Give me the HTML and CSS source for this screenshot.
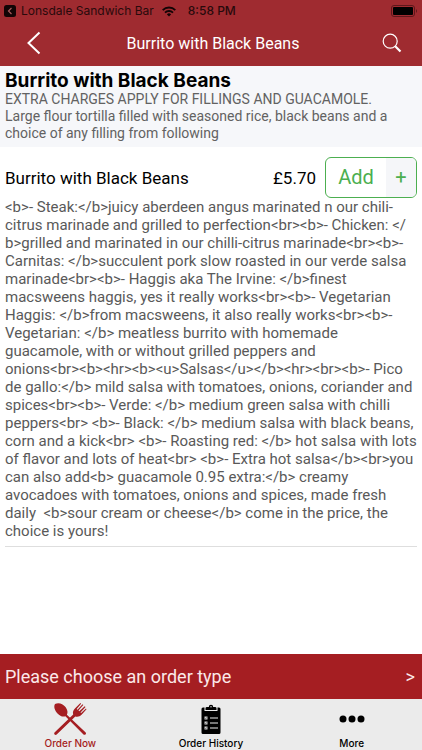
FILE: index.html
```html
<!DOCTYPE html>
<html lang="en">
<head>
<meta charset="utf-8">
<meta name="viewport" content="width=device-width, initial-scale=1">
<title>Burrito with Black Beans</title>
<link rel="stylesheet" href="styles.css">
</head>
<body>
<header class="top">
  <div class="status">
    <a class="back-app" href="#">
      <svg width="12" height="12" viewBox="0 0 12 12"><rect width="12" height="12" rx="2.5" fill="#120405"/><path d="M7.500 3 4.500 6l3 3" fill="none" stroke="#a65a5d" stroke-width="1.2"/></svg>
      <span>Lonsdale Sandwich Bar</span>
    </a>
    <svg class="wifi" width="14" height="11" viewBox="0 0 14 11"><g fill="none" stroke="#120405" stroke-width="1.9"><path d="M.7 4.100a9 9 0 0 1 12.600 0"/><path d="M3 6.600a5.800 5.800 0 0 1 8 0"/></g><path d="M4.900 8.400a3 3 0 0 1 4.200 0L7 10.600z" fill="#120405"/></svg>
    <time class="clock">8:58 PM</time>
    <svg class="battery" width="27" height="12" viewBox="0 0 27 12"><rect x=".5" y=".5" width="23" height="11" rx="2.5" fill="none" stroke="#5d171b"/><rect x="2" y="2" width="20" height="8" rx="1" fill="#000"/><path d="M25 4q2 2 0 4z" fill="#5d171b"/></svg>
  </div>
  <nav class="navbar">
    <button class="icon-button" aria-label="Back"><svg width="14" height="24" viewBox="0 0 14 24"><path d="M12.500 1.500 1.500 12l11 10.500" fill="none" stroke="#fff" stroke-width="2"/></svg></button>
    <h1>Burrito with Black Beans</h1>
    <button class="icon-button" aria-label="Search"><svg width="20" height="20" viewBox="0 0 20 20" fill="none" stroke="#fff"><circle cx="8.200" cy="8.200" r="7" stroke-width="1.2"/><path d="m13.200 13.200 5.300 5.300" stroke-width="2.2"/></svg></button>
  </nav>
</header>
<main>
  <section class="intro">
    <h2>Burrito with Black Beans</h2>
    <p>EXTRA CHARGES APPLY FOR FILLINGS AND GUACAMOLE.<br>Large flour tortilla filled with seasoned rice, black beans and a<br>choice of any filling from following</p>
  </section>
  <article class="item">
    <div class="item-row">
      <h3>Burrito with Black Beans</h3>
      <span class="price">£5.70</span>
      <button class="add"><span class="add-label">Add</span><span class="plus">+</span></button>
    </div>
    <p class="description">&lt;b&gt;- Steak:&lt;/b&gt;juicy aberdeen angus marinated n our chili-
citrus marinade and grilled to perfection&lt;br&gt;&lt;b&gt;- Chicken: &lt;/
b&gt;grilled and marinated in our chilli-citrus marinade&lt;br&gt;&lt;b&gt;-
Carnitas: &lt;/b&gt;succulent pork slow roasted in our verde salsa
marinade&lt;br&gt;&lt;b&gt;- Haggis aka The Irvine: &lt;/b&gt;finest
macsweens haggis, yes it really works&lt;br&gt;&lt;b&gt;- Vegetarian
Haggis: &lt;/b&gt;from macsweens, it also really works&lt;br&gt;&lt;b&gt;-
Vegetarian: &lt;/b&gt; meatless burrito with homemade
guacamole, with or without grilled peppers and
onions&lt;br&gt;&lt;b&gt;&lt;hr&gt;&lt;b&gt;&lt;u&gt;Salsas&lt;/u&gt;&lt;/b&gt;&lt;hr&gt;&lt;br&gt;&lt;b&gt;- Pico
de gallo:&lt;/b&gt; mild salsa with tomatoes, onions, coriander and
spices&lt;br&gt;&lt;b&gt;- Verde: &lt;/b&gt; medium green salsa with chilli
peppers&lt;br&gt; &lt;b&gt;- Black: &lt;/b&gt; medium salsa with black beans,
corn and a kick&lt;br&gt; &lt;b&gt;- Roasting red: &lt;/b&gt; hot salsa with lots
of flavor and lots of heat&lt;br&gt; &lt;b&gt;- Extra hot salsa&lt;/b&gt;&lt;br&gt;you
can also add&lt;b&gt; guacamole 0.95 extra:&lt;/b&gt; creamy
avocadoes with tomatoes, onions and spices, made fresh
daily  &lt;b&gt;sour cream or cheese&lt;/b&gt; come in the price, the
choice is yours!</p>
  </article>
</main>
<footer>
  <button class="order-type"><span>Please choose an order type</span><span>&gt;</span></button>
  <nav class="tabs">
    <a class="tab active" href="#">
      <svg width="34" height="34" viewBox="0 0 34 34"><path d="M2 2C5 .3 9.500 1 12.500 5c2.200 3 2.500 5.500 1.400 7.800L32.700 30.400q.8 1.200-.2 2t-2 0L12.400 14.300C9.500 15.200 7 14 4.500 11.500 1.500 8 .5 4.500 2 2z" fill="#a51e22"/><path d="M1.500 30.400 20.200 12.600c-.8-2.800.2-4.600 2.200-6.500l5-5 .7.600-4.400 5.300.8.7 5-5.500.8.700-4.800 5.700.8.7 5.400-5 .8.700-5 5.500.6.600L33 6.500l.5.7-4.700 5.300c-2 2-4 2.700-6.500 2L3.700 32.500q-1.200.8-2.100 0t-.1-2.100z" fill="#a51e22"/></svg>
      <span>Order Now</span>
    </a>
    <a class="tab" href="#">
      <svg width="22" height="34" viewBox="0 0 22 34"><path d="M3 5.500h1.500V9h13V5.500H19q1.500 0 1.500 1.500v23.500q0 1.500-1.500 1.500H3q-1.500 0-1.500-1.500V7q0-1.500 1.500-1.500z"/><path d="M5.500 8V6.200q0-1.200 1.500-1.200h1.800a2.200 2.200 0 0 1 4.400 0H15q1.500 0 1.500 1.200V8z"/><circle cx="11" cy="4.800" r=".7" fill="#ebebeb"/><path d="M10 16h8M10 21h8M10 26h8" stroke="#ebebeb" stroke-width="1.200"/><path d="M4.500 14.500h3v3h-3zM4.500 19.500h3v3h-3zM4.500 24.500h3v3h-3z" fill="#d4d4d4"/><path d="m5 16 .8.800L7.200 15M5 21l.8.800L7.200 20M5 26l.8.800L7.200 25" fill="none" stroke="#555" stroke-width=".6"/></svg>
      <span>Order History</span>
    </a>
    <a class="tab" href="#">
      <svg width="26" height="34" viewBox="0 0 26 34"><circle cx="4" cy="17" r="3.500"/><circle cx="13" cy="17" r="3.500"/><circle cx="22" cy="17" r="3.500"/></svg>
      <span>More</span>
    </a>
  </nav>
</footer>
</body>
</html>
```
FILE: styles.css
```css
* { box-sizing: border-box; }
body {
  margin: 0;
  min-height: 100vh;
  display: flex;
  flex-direction: column;
  background: #fff;
  color: #000;
  font-family: Roboto, "Liberation Sans", sans-serif;
}
h1, h2, h3, p { margin: 0; font-weight: 400; }
button { border: 0; padding: 0; background: none; font: inherit; color: inherit; }
a { color: inherit; text-decoration: none; }
svg { display: block; flex: none; }

.top { background: #9f2b30; }
.status {
  display: flex;
  align-items: center;
  height: 22px;
  padding: 0 4px;
  font: 12px/22px Inter, sans-serif;
  color: #280a0c;
}
.back-app { display: flex; align-items: center; gap: 5px; }
.wifi { margin-left: 8px; }
.clock { margin-left: 12px; font-weight: 500; }
.battery { margin-left: auto; }
.navbar {
  display: flex;
  align-items: center;
  justify-content: space-between;
  height: 44px;
  padding: 0 18px 2px 22px;
  color: #fff;
}
.navbar h1 { font-size: 16px; }
.icon-button { display: grid; place-items: center; width: 24px; height: 40px; }

main { flex: 1; }
.intro { padding: 4px 5px 5px; background: #f6f7fa; }
.intro h2 { font: 700 19px/21px Inter, sans-serif; }
.intro p { font-size: 14px; line-height: 17px; color: #626262; white-space: nowrap; }
.item { margin: 0 5px; padding: 10px 0 6px; border-bottom: 1px solid #dedede; }
.item-row { display: flex; align-items: center; }
.item-row h3 { flex: 1; font-size: 17px; }
.price { margin-right: 9px; font-size: 17px; }
.add {
  display: flex;
  width: 92px;
  height: 41px;
  overflow: hidden;
  border: 1px solid #4caf50;
  border-radius: 6px;
  color: #4caf50;
  line-height: 39px;
}
.add-label { flex: 1; font-size: 20px; }
.plus { width: 30px; background: #f5f6f9; font-size: 20px; }
.description { font-size: 15px; line-height: 18px; color: #595959; white-space: pre; }

.order-type {
  display: flex;
  align-items: center;
  justify-content: space-between;
  width: 100%;
  height: 45px;
  padding: 0 7px 0 5px;
  background: #a51e22;
  color: #fbe9e9;
  font-size: 18px;
}
.tabs {
  display: grid;
  grid-template-columns: repeat(3, 1fr);
  height: 51px;
  padding-top: 3px;
  background: #ebebeb;
}
.tab {
  display: flex;
  flex-direction: column;
  align-items: center;
  font: 500 10px/14px Inter, sans-serif;
}
.active { color: #a51e22; }
```
